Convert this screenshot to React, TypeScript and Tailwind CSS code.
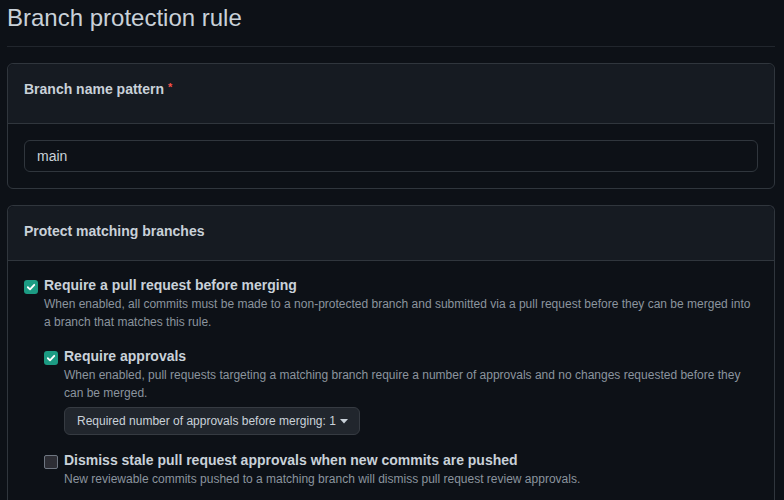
import React from "react";

type CheckRowProps = {
  checked: boolean;
  title: string;
  description: string;
  children?: React.ReactNode;
};

const CheckBox = ({ checked }: { checked: boolean }) =>
  checked ? (
    <span className="mt-[5px] flex h-[14px] w-[14px] shrink-0 items-center justify-center rounded-[3px] bg-[#1c9b83]">
      <svg width="10" height="10" viewBox="0 0 12 12" fill="none">
        <path
          d="M2.2 6.3 4.8 8.8 9.9 3.4"
          stroke="#ffffff"
          strokeWidth="2.2"
          strokeLinecap="round"
          strokeLinejoin="round"
        />
      </svg>
    </span>
  ) : (
    <span className="mt-[5px] h-[14px] w-[14px] shrink-0 rounded-[2px] border border-[#6e7681] bg-[#2d2e35]" />
  );

const CheckRow: React.FC<CheckRowProps> = ({
  checked,
  title,
  description,
  children,
}) => {
  return (
    <div className="flex gap-[6px]">
      <CheckBox checked={checked} />
      <div className="min-w-0 flex-1">
        <div className="text-[14px] font-bold leading-[20px] text-[#c9d1d9]">
          {title}
        </div>
        <p className="text-[12px] leading-[18px] text-[#8b949e]">
          {description}
        </p>
        {children}
      </div>
    </div>
  );
};

export default function App() {
  return (
    <div className="min-h-[500px] w-full bg-[#0d1117] px-[7px] font-['Liberation_Sans',Arial,sans-serif]">
      <div className="w-[768px]">
        {/* Title */}
        <div className="h-[47px] border-b border-[#21262d]">
          <h1 className="text-[24px] font-normal leading-[35px] text-[#c9d1d9]">
            Branch protection rule
          </h1>
        </div>

        {/* Branch name pattern */}
        <div className="mt-[16px] rounded-[6px] border border-[#30363d]">
          <div className="h-[60px] rounded-t-[6px] border-b border-[#30363d] bg-[#161b22] px-[16px] pt-[15px]">
            <h2 className="text-[14px] font-bold leading-[20px] text-[#c9d1d9]">
              Branch name pattern{" "}
              <span className="relative -top-[3px] text-[11px] text-[#f85149]">
                *
              </span>
            </h2>
          </div>
          <div className="px-[16px] py-[16px]">
            <div className="flex h-[32px] items-center rounded-[6px] border border-[#30363d] bg-[#0d1117] px-[12px] text-[14px] text-[#c9d1d9]">
              main
            </div>
          </div>
        </div>

        {/* Protect matching branches */}
        <div className="mt-[16px] rounded-t-[6px] border-x border-t border-[#30363d]">
          <div className="h-[55px] rounded-t-[6px] border-b border-[#30363d] bg-[#161b22] px-[16px] pt-[15px]">
            <h2 className="text-[14px] font-bold leading-[20px] text-[#c9d1d9]">
              Protect matching branches
            </h2>
          </div>
          <div className="px-[16px] pb-[20px] pt-[14px]">
            <CheckRow
              checked
              title="Require a pull request before merging"
              description="When enabled, all commits must be made to a non-protected branch and submitted via a pull request before they can be merged into a branch that matches this rule."
            >
              <div className="mt-[15px] flex flex-col gap-[15px]">
                <CheckRow
                  checked
                  title="Require approvals"
                  description="When enabled, pull requests targeting a matching branch require a number of approvals and no changes requested before they can be merged."
                >
                  <button
                    type="button"
                    className="mt-[5px] flex h-[28px] items-center gap-[4px] rounded-[6px] border border-[#363b42] bg-[#21262d] pl-[12px] pr-[11px] text-[12px] text-[#c9d1d9]"
                  >
                    Required number of approvals before merging: 1
                    <svg width="8" height="5" viewBox="0 0 8 5">
                      <path d="M0 0h8L4 4.5z" fill="#c9d1d9" />
                    </svg>
                  </button>
                </CheckRow>
                <CheckRow
                  checked={false}
                  title="Dismiss stale pull request approvals when new commits are pushed"
                  description="New reviewable commits pushed to a matching branch will dismiss pull request review approvals."
                />
              </div>
            </CheckRow>
          </div>
        </div>
      </div>
    </div>
  );
}
